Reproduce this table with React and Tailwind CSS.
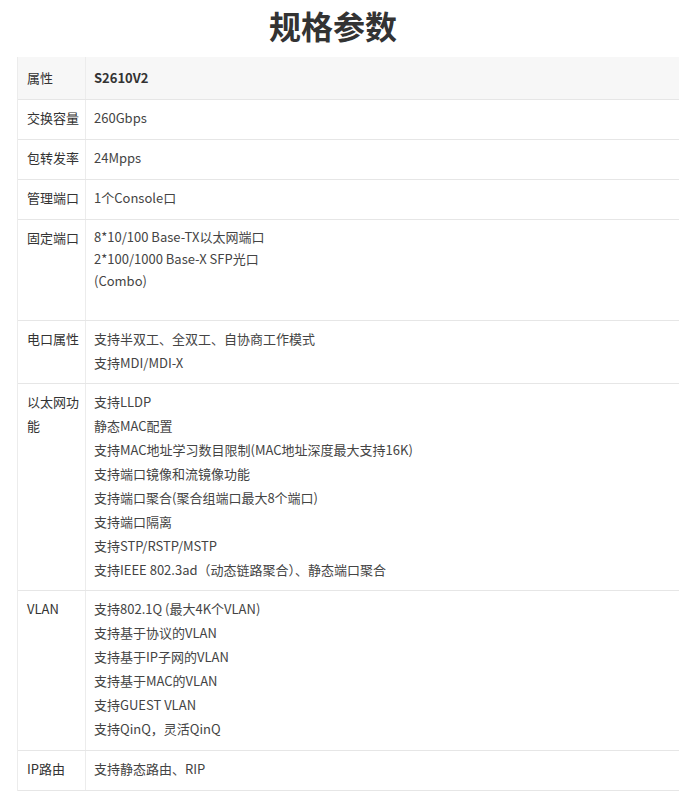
// Spec sheet: 规格参数 table for S2610V2

const ROWS = [
  { label: '交换容量', lines: ['260Gbps'] },
  { label: '包转发率', lines: ['24Mpps'] },
  { label: '管理端口', lines: ['1个Console口'] },
  {
    label: '固定端口',
    lines: ['8*10/100 Base-TX以太网端口', '2*100/1000 Base-X SFP光口', '(Combo)'],
    pad: 'pt-[6px] pb-[28px]',
    tight: true,
  },
  {
    label: '电口属性',
    lines: ['支持半双工、全双工、自协商工作模式', '支持MDI/MDI-X'],
    pad: 'pt-[6px] pb-[8px]',
  },
  {
    label: '以太网功能',
    lines: [
      '支持LLDP',
      '静态MAC配置',
      '支持MAC地址学习数目限制(MAC地址深度最大支持16K)',
      '支持端口镜像和流镜像功能',
      '支持端口聚合(聚合组端口最大8个端口)',
      '支持端口隔离',
      '支持STP/RSTP/MSTP',
      '支持IEEE 802.3ad（动态链路聚合）、静态端口聚合',
    ],
    pad: 'pt-[6px] pb-[8px]',
  },
  {
    label: 'VLAN',
    lines: [
      '支持802.1Q (最大4K个VLAN)',
      '支持基于协议的VLAN',
      '支持基于IP子网的VLAN',
      '支持基于MAC的VLAN',
      '支持GUEST VLAN',
      '支持QinQ，灵活QinQ',
    ],
  },
  { label: 'IP路由', lines: ['支持静态路由、RIP'] },
];

function SpecRow({ row }) {
  const pad = row.pad ?? 'pt-[6px] pb-[9px]';
  return (
    <div className="flex border-t border-[#e6e6e6]">
      <div className={`w-[68px] shrink-0 border-r border-[#ececec] pl-[9px] pr-[6px] text-[#333] leading-[24px] ${pad}`}>
        {row.label}
      </div>
      <div className={`flex-1 pl-[8px] text-[#444] ${pad} ${row.tight ? 'leading-[22px]' : 'leading-[24px]'}`}>
        {row.lines.map((l, i) => (
          <div key={i}>{l}</div>
        ))}
      </div>
    </div>
  );
}

export default function App() {
  return (
    <div className="min-h-[791px] bg-white font-['Noto_Sans_CJK_SC',sans-serif] text-[13px]">
      <h1 className="pt-[5px] pr-[21px] text-center text-[32px] font-semibold leading-[40px] text-[#333]">规格参数</h1>

      <div className="ml-[17px] mr-[8px] mt-[12px] border-l border-[#ececec]">
        {/* header */}
        <div className="flex bg-[#f7f7f7]">
          <div className="w-[68px] shrink-0 border-r border-[#ececec] pl-[9px] pt-[9px] pb-[9px] leading-[24px] text-[#333]">
            属性
          </div>
          <div className="flex-1 pl-[8px] pt-[9px] pb-[9px] font-bold leading-[24px] text-[#333]">S2610V2</div>
        </div>

        {ROWS.map((r) => (
          <SpecRow key={r.label} row={r} />
        ))}
        <div className="border-t border-[#e6e6e6]" />
      </div>
    </div>
  );
}
